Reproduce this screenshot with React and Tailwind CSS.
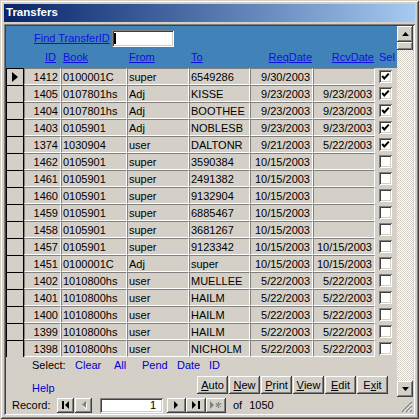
import React from "react";

const raised =
  "shadow-[inset_-1px_-1px_#404040,inset_1px_1px_#ffffff,inset_-2px_-2px_#808080,inset_2px_2px_#d4d0c8]";
const sunken =
  "shadow-[inset_1px_1px_#808080,inset_-1px_-1px_#ffffff,inset_2px_2px_#404040,inset_-2px_-2px_#d4d0c8]";
const cols = "grid grid-cols-[18px_37px_66px_62px_61px_63px_62px_22px]";

const rows = [
  ["1412", "0100001C", "super", "6549286", "9/30/2003", "", true],
  ["1405", "0107801hs", "Adj", "KISSE", "9/23/2003", "9/23/2003", true],
  ["1404", "0107801hs", "Adj", "BOOTHEE", "9/23/2003", "9/23/2003", true],
  ["1403", "0105901", "Adj", "NOBLESB", "9/23/2003", "9/23/2003", true],
  ["1374", "1030904", "user", "DALTONR", "9/21/2003", "5/22/2003", true],
  ["1462", "0105901", "super", "3590384", "10/15/2003", "", false],
  ["1461", "0105901", "super", "2491382", "10/15/2003", "", false],
  ["1460", "0105901", "super", "9132904", "10/15/2003", "", false],
  ["1459", "0105901", "super", "6885467", "10/15/2003", "", false],
  ["1458", "0105901", "super", "3681267", "10/15/2003", "", false],
  ["1457", "0105901", "super", "9123342", "10/15/2003", "10/15/2003", false],
  ["1451", "0100001C", "Adj", "super", "10/15/2003", "10/15/2003", false],
  ["1402", "1010800hs", "user", "MUELLEE", "5/22/2003", "5/22/2003", false],
  ["1401", "1010800hs", "user", "HAILM", "5/22/2003", "5/22/2003", false],
  ["1400", "1010800hs", "user", "HAILM", "5/22/2003", "5/22/2003", false],
  ["1399", "1010800hs", "user", "HAILM", "5/22/2003", "5/22/2003", false],
  ["1398", "1010800hs", "user", "NICHOLM", "5/22/2003", "5/22/2003", false],
];

const Cell = ({ children, right }) => (
  <div
    className={`h-[17px] border border-t-[#808080] border-l-[#808080] border-b-white border-r-white bg-[#d4d0c8] pl-[1px] pr-[2px] leading-[16px] whitespace-nowrap overflow-hidden ${
      right ? "text-right" : ""
    }`}
  >
    {children}
  </div>
);

const CheckBox = ({ checked }) => (
  <div className={`w-[13px] h-[13px] bg-white ${sunken}`}>
    {checked && (
      <svg width="13" height="13" viewBox="0 0 13 13">
        <path d="M3.2 6 L5.3 8.4 L9.8 3.6" stroke="#000" strokeWidth="2" fill="none" />
      </svg>
    )}
  </div>
);

const Btn = ({ k, rest, pre }) => (
  <div className={`w-[31px] h-[18px] bg-[#d4d0c8] ${raised} flex items-center justify-center text-black`}>
    {pre}
    <span className="underline">{k}</span>
    {rest}
  </div>
);

const NavBtn = ({ w, children }) => (
  <div className={`${w} h-[15px] bg-[#d4d0c8] ${raised} flex items-center justify-center`}>{children}</div>
);

export default function App() {
  return (
    <div
      className={`w-[419px] h-[419px] bg-[#d4d0c8] p-[4px] flex flex-col text-[11px] text-black font-['Liberation_Sans',Arial,sans-serif] shadow-[inset_1px_1px_#d4d0c8,inset_-1px_-1px_#404040,inset_2px_2px_#ffffff,inset_-2px_-2px_#808080]`}
    >
      {/* title bar */}
      <div className="h-[18px] shrink-0 bg-linear-to-r from-[#0a246a] to-[#a6caf0] flex items-center pl-[2px]">
        <span className="text-white font-bold text-[11.5px]">Transfers</span>
      </div>

      {/* client area */}
      <div className={`mt-[2px] flex-1 p-[2px] flex flex-col ${sunken}`}>
        <div className="flex h-[371px]">
          {/* form */}
          <div className="w-[391px] flex flex-col">
            {/* header */}
            <div className="h-[42px] bg-[#4182b8] pt-[4px]">
              <div className="flex h-[17px] items-center pl-[28px]">
                <span className="w-[78px] text-[#1010e0] underline">Find TransferID</span>
                <div className={`w-[62px] h-[17px] bg-white ${sunken} flex items-center pl-[2px]`}>
                  <div className="w-[2px] h-[11px] bg-black" />
                </div>
              </div>
              <div className={`${cols} mt-[2px] h-[17px] leading-[17px] text-[#1010e0] whitespace-nowrap`}>
                <div />
                <div className="text-right pr-[5px] underline">ID</div>
                <div className="pl-[2px] underline">Book</div>
                <div className="pl-[2px] underline">From</div>
                <div className="pl-[2px] underline">To</div>
                <div className="text-right pr-[1px] underline">ReqDate</div>
                <div className="text-right pr-[1px] underline">RcvDate</div>
                <div className="pl-[4px]">Sel</div>
              </div>
            </div>

            {/* detail rows */}
            <div className="flex flex-col">
              {rows.map((r, i) => (
                <div key={r[0]} className={`${cols} h-[17px]`}>
                  <div className="h-[17px] border-l border-t border-r border-black flex items-center justify-center">
                    {i === 0 && (
                      <svg width="6" height="10" viewBox="0 0 6 10">
                        <polygon points="0,0 6,5 0,10" fill="#000" />
                      </svg>
                    )}
                  </div>
                  <Cell right>{r[0]}</Cell>
                  <Cell>{r[1]}</Cell>
                  <Cell>{r[2]}</Cell>
                  <Cell>{r[3]}</Cell>
                  <Cell right>{r[4]}</Cell>
                  <Cell right>{r[5]}</Cell>
                  <div className="flex items-center pl-[4px]">
                    <CheckBox checked={r[6]} />
                  </div>
                </div>
              ))}
            </div>

            {/* footer */}
            <div className="flex-1 flex flex-col">
              <div className="flex h-[17px] leading-[17px] pl-[26px]">
                <span className="w-[43px]">Select:</span>
                <span className="w-[39px] text-[#0000cc]">Clear</span>
                <span className="w-[28px] text-[#0000cc]">All</span>
                <span className="w-[35px] text-[#0000cc]">Pend</span>
                <span className="w-[32px] text-[#0000cc]">Date</span>
                <span className="text-[#0000cc]">ID</span>
              </div>
              <div className="flex mt-[2px] h-[18px] pl-[26px]">
                <span className="w-[165px] text-[#0000cc] pt-[4px]">Help</span>
                <div className="flex gap-[1px]">
                  <Btn k="A" rest="uto" />
                  <Btn k="N" rest="ew" />
                  <Btn k="P" rest="rint" />
                  <Btn k="V" rest="iew" />
                  <Btn k="E" rest="dit" />
                  <Btn pre="E" k="x" rest="it" />
                </div>
              </div>
            </div>
          </div>

          {/* vertical scrollbar */}
          <div className="w-[16px] flex flex-col">
            <div className={`h-[16px] bg-[#d4d0c8] ${raised} flex items-center justify-center`}>
              <svg width="7" height="4" viewBox="0 0 7 4">
                <polygon points="3.5,0 7,4 0,4" fill="#000" />
              </svg>
            </div>
            <div className={`h-[8px] bg-[#d4d0c8] ${raised}`} />
            <div className="flex-1 bg-[image:conic-gradient(#d4d0c8_25%,#ffffff_0_50%,#d4d0c8_0_75%,#ffffff_0)] bg-[length:2px_2px]" />
            <div className={`h-[16px] bg-[#d4d0c8] ${raised} flex items-center justify-center`}>
              <svg width="7" height="4" viewBox="0 0 7 4">
                <polygon points="0,0 7,0 3.5,4" fill="#000" />
              </svg>
            </div>
          </div>
        </div>

        {/* navigation bar */}
        <div className="flex h-[16px]">
          <div className="w-[391px] flex items-center">
            <span className="w-[51px] pl-[6px]">Record:</span>
            <NavBtn w="w-[17px]">
              <svg width="8" height="8" viewBox="0 0 8 8">
                <rect x="0" y="0" width="2" height="8" fill="#000" />
                <polygon points="7,0 3,4 7,8" fill="#000" />
              </svg>
            </NavBtn>
            <div className="ml-[1px]">
              <NavBtn w="w-[17px]">
                <svg width="6" height="9" viewBox="0 0 6 9">
                  <polygon points="5,1 1,4.5 5,8" fill="#ffffff" transform="translate(1,1)" />
                  <polygon points="5,0 1,3.5 5,7" fill="#808080" />
                </svg>
              </NavBtn>
            </div>
            <div className={`ml-[8px] w-[63px] h-[15px] bg-white ${sunken} text-right pr-[7px] leading-[15px]`}>1</div>
            <div className="ml-[4px] flex">
              <NavBtn w="w-[19px]">
                <svg width="5" height="8" viewBox="0 0 5 8">
                  <polygon points="0,0 4,4 0,8" fill="#000" />
                </svg>
              </NavBtn>
              <NavBtn w="w-[20px]">
                <svg width="8" height="8" viewBox="0 0 8 8">
                  <polygon points="0,0 4,4 0,8" fill="#000" />
                  <rect x="6" y="0" width="2" height="8" fill="#000" />
                </svg>
              </NavBtn>
              <NavBtn w="w-[20px]">
                <svg width="12" height="9" viewBox="0 0 12 9">
                  <polygon points="0,0 4,4 0,8" fill="#808080" />
                  <path d="M8.5 1 V7 M5.8 2.5 L11.2 5.5 M5.8 5.5 L11.2 2.5" stroke="#808080" strokeWidth="1.2" />
                </svg>
              </NavBtn>
            </div>
            <span className="ml-[7px]">of</span>
            <span className="ml-[7px]">1050</span>
          </div>
          <div className="w-[16px] flex items-end justify-end">
            <svg width="12" height="12" viewBox="0 0 12 12">
              <path d="M11 1 L1 11 M11 5 L5 11 M11 9 L9 11" stroke="#808080" strokeWidth="1.2" />
              <path d="M11 2.5 L2.5 11 M11 6.5 L6.5 11" stroke="#ffffff" strokeWidth="0.9" />
            </svg>
          </div>
        </div>
      </div>
    </div>
  );
}
